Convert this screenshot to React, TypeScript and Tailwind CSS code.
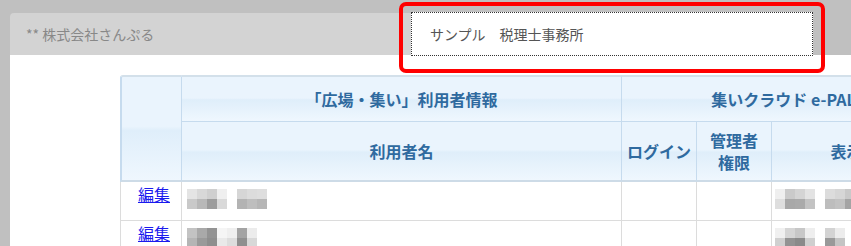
const font = { fontFamily: '"Noto Sans CJK JP", "Noto Sans", sans-serif' };

type Mosaic = string[][];

function Blur({ groups }: { groups: Mosaic[] }) {
    return (
        <div className="flex gap-[10px]">
            {groups.map((g, gi) => (
                <div key={gi} className="flex flex-col">
                    {g.map((row, ri) => (
                        <div key={ri} className="flex">
                            {row.map((c, ci) => (
                                <div key={ci} className="h-[10px] w-[10px]" style={{ backgroundColor: c }} />
                            ))}
                        </div>
                    ))}
                </div>
            ))}
        </div>
    );
}

const rows: { name: Mosaic[]; disp: Mosaic[] }[] = [
    {
        name: [
            [
                ["#e4e4e4", "#d8d8d8", "#cfcfcf", "#efefef"],
                ["#c9c9c9", "#b8b8b8", "#9c9c9c", "#d9d9d9"],
            ],
            [
                ["#d6d6d6", "#dcdcdc", "#dedede"],
                ["#b3b3b3", "#bebebe", "#b6b6b6"],
            ],
        ],
        disp: [
            [
                ["#efefef", "#cacaca", "#d4d4d4", "#e3e3e3"],
                ["#dedede", "#a8a8a8", "#aaaaaa", "#c3c3c3"],
            ],
            [
                ["#dcdcdc", "#d6d6d6", "#c9c9c9"],
                ["#bdbdbd", "#c2c2c2", "#a4a4a4"],
            ],
        ],
    },
    {
        name: [
            [
                ["#c3c3c3", "#a9a9a9", "#939393", "#f5f5f5", "#efefef", "#a3a3a3", "#ececec"],
                ["#b5b5b5", "#9a9a9a", "#8e8e8e", "#e9e9e9", "#dddddd", "#8f8f8f", "#d8d8d8"],
            ],
        ],
        disp: [
            [
                ["#f0f0f0", "#d5d5d5", "#c7c7c7", "#eeeeee"],
                ["#d0d0d0", "#939393", "#8a8a8a", "#cfcfcf"],
            ],
            [
                ["#d3d3d3", "#ececec"],
                ["#999999", "#c4c4c4"],
            ],
        ],
    },
];

const th =
    "border-r border-b border-[#c6dbee] bg-[linear-gradient(#eaf4fd_0%,#eaf4fd_48%,#dfeefa_52%,#eff7fe_100%)] p-0 text-center align-middle text-[16px] font-bold text-[#2f6a9f]";
const td = "border-r border-b border-[#dcdcdc] p-0 align-top";

export default function App() {
    return (
        <div className="relative h-[246px] w-[851px] overflow-hidden bg-[#c0c0c0]" style={font}>
            <div className="ml-[10px] mt-[13px] w-[1000px]">
                {/* header bar */}
                <div className="flex h-[42px]">
                    <div className="flex w-[401px] items-center rounded-tl-[4px] bg-[#d3d3d3] pl-[16px] text-[14px] text-[#888]">
                        ** 株式会社さんぷる
                    </div>
                    <div className="-mt-[1px] flex h-[44px] w-[402px] items-center border border-dotted border-[#333] bg-white pl-[18px] text-[14px] text-[#555]">
                        サンプル　税理士事務所
                    </div>
                </div>

                {/* body */}
                <div className="h-[200px] bg-white pl-[110px] pt-[20px]">
                    <table className="table-fixed border-separate border-spacing-0" style={{ width: 906 }}>
                        <colgroup>
                            <col className="w-[62px]" />
                            <col className="w-[440px]" />
                            <col className="w-[75px]" />
                            <col className="w-[75px]" />
                            <col className="w-[166px]" />
                            <col className="w-[88px]" />
                        </colgroup>
                        <thead>
                            <tr>
                                <th
                                    rowSpan={2}
                                    className={`${th} rounded-tl-[3px] border-l-2 border-t-2 border-b-2 border-t-[#d3e0ea] border-b-[#cddbe7]`}
                                />
                                <th className={`${th} h-[47px] border-t-2 border-t-[#d3e0ea]`}>「広場・集い」利用者情報</th>
                                <th colSpan={4} className={`${th} h-[47px] border-t-2 border-t-[#d3e0ea]`}>
                                    集いクラウド e-PAL利用者情報
                                </th>
                            </tr>
                            <tr>
                                <th className={`${th} h-[60px] border-b-2 border-b-[#cddbe7]`}>利用者名</th>
                                <th className={`${th} border-b-2 border-b-[#cddbe7]`}>ログイン</th>
                                <th className={`${th} border-b-2 border-b-[#cddbe7] leading-[22px]`}>
                                    管理者
                                    <br />
                                    権限
                                </th>
                                <th className={`${th} border-b-2 border-b-[#cddbe7]`}>表示名</th>
                                <th className={`${th} border-b-2 border-b-[#cddbe7]`}>メール</th>
                            </tr>
                        </thead>
                        <tbody>
                            {rows.map((r, i) => (
                                <tr key={i}>
                                    <td className={`${td} h-[39px] border-l pl-[6px] text-center align-middle`}>
                                        <a href="#" className="text-[16px] text-[#1a1aee] underline">
                                            編集
                                        </a>
                                    </td>
                                    <td className={td}>
                                        <div className="pl-[5px] pt-[7px]">
                                            <Blur groups={r.name} />
                                        </div>
                                    </td>
                                    <td className={td} />
                                    <td className={td} />
                                    <td className={td}>
                                        <div className="pl-[3px] pt-[7px]">
                                            <Blur groups={r.disp} />
                                        </div>
                                    </td>
                                    <td className={td} />
                                </tr>
                            ))}
                        </tbody>
                    </table>
                </div>
            </div>

            {/* red highlight annotation */}
            <div className="absolute left-[399px] top-[2px] h-[71px] w-[426px] rounded-[7px] border-4 border-[#ff0000]" />
        </div>
    );
}
